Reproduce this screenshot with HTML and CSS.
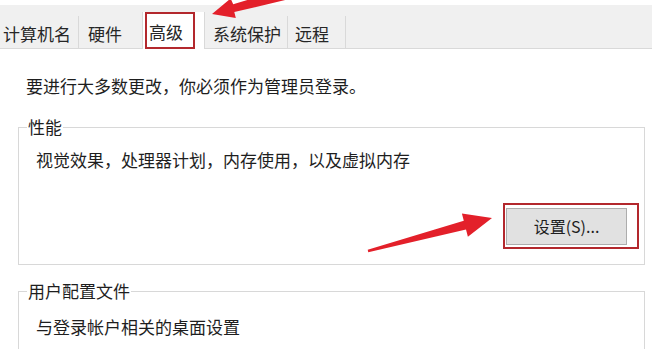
FILE: index.html
```html
<!DOCTYPE html>
<html lang="zh-CN">
<head>
<meta charset="utf-8">
<title>系统属性 - 高级</title>
<link rel="stylesheet" href="styles.css">
</head>
<body>
<div class="window">
  <div class="tabbar">
    <div class="tab tab-name">计算机名</div>
    <div class="tab tab-hw">硬件</div>
    <div class="tab tab-adv active">高级<span class="mark mark-tab"></span></div>
    <div class="tab tab-sys">系统保护</div>
    <div class="tab tab-remote">远程</div>
  </div>
  <div class="panel">
    <p class="note">要进行大多数更改，你必须作为管理员登录。</p>
    <fieldset class="group group-perf">
      <legend>性能</legend>
      <p class="desc desc-perf">视觉效果，处理器计划，内存使用，以及虚拟内存</p>
      <div class="actions">
        <button class="btn" type="button">设置(S)...<span class="mark mark-btn"></span></button>
      </div>
    </fieldset>
    <fieldset class="group group-profile">
      <legend>用户配置文件</legend>
      <p class="desc desc-profile">与登录帐户相关的桌面设置</p>
    </fieldset>
  </div>
  <svg class="arrows" width="652" height="349" viewBox="0 0 652 349" aria-hidden="true">
    <polygon class="arrow" points="300,-16 233.2,4.3 230.6,-1.5 212,14 235.8,17.9 234.3,12.1 302,-4"/>
    <polygon class="arrow" points="367.7,249.8 463.8,220.7 461.9,213.5 492,218 467.9,236.7 466.0,229.5 368.3,252.2"/>
  </svg>
</div>
</body>
</html>
```

FILE: styles.css
```css
* { box-sizing: border-box; }

html, body {
  margin: 0;
  padding: 0;
  background: #ffffff;
}

body {
  width: 652px;
  height: 349px;
  overflow: hidden;
  font-family: "Noto Sans CJK SC", "Noto Sans", sans-serif;
  font-size: 17px;
  color: #1e1e1e;
}

.window {
  position: relative;
  width: 652px;
  height: 349px;
  overflow: hidden;
}

/* ---- tab strip ---- */
.tabbar {
  margin-top: 5px;
  height: 44px;
  background: #f0f0f0;
  border-bottom: 1px solid #d9d9d9;
  display: flex;
  align-items: flex-end;
}

.tab {
  height: 32px;
  line-height: 35px;
  border-right: 1px solid #d9d9d9;
  white-space: nowrap;
  background: #f0f0f0;
  color: #262626;
}

.tab-name { width: 79px; padding-left: 3px; }
.tab-hw { width: 64px; padding-left: 9px; }
.tab-adv { width: 62px; padding-left: 6px; }
.tab-sys { width: 83px; padding-left: 8px; }
.tab-remote { width: 58px; padding-left: 7px; }

.tab.active {
  position: relative;
  height: 37px;
  line-height: 40px;
  margin-bottom: -1px;
  background: #ffffff;
  border-left: 1px solid #d9d9d9;
  z-index: 1;
}

.tab-hw + .tab.active { margin-left: -1px; width: 63px; }

.mark {
  position: absolute;
  border: 2px solid #b3282d;
  pointer-events: none;
}

.mark-tab {
  left: 2px;
  top: 0;
  width: 50px;
  height: 37px;
}

/* ---- page ---- */
.note {
  margin: 25px 0 0 26px;
  line-height: 24px;
}

.group {
  margin: 17px 7px 0 18px;
  border: 1px solid #d8d8d8;
  padding: 0 0 19px 8px;
  min-width: 0;
}

.group legend {
  padding: 0 1px;
  line-height: 24px;
}

.desc {
  margin: 9px 0 0 9px;
  line-height: 24px;
}

.desc-profile { margin-top: 12px; }

.group-profile {
  margin-top: 14px;
  padding-bottom: 60px;
}

.actions {
  display: flex;
  justify-content: flex-end;
  margin-top: 36px;
  padding-right: 17px;
}

.btn {
  position: relative;
  width: 121px;
  height: 37px;
  padding: 0;
  background: #e1e1e1;
  border: 1px solid #adadad;
  font-family: inherit;
  font-size: 16px;
  color: #1e1e1e;
  line-height: 35px;
}

.mark-btn {
  left: -4px;
  top: -6px;
  width: 136px;
  height: 46px;
}

/* ---- annotation arrows ---- */
.arrows {
  position: absolute;
  left: 0;
  top: 0;
  pointer-events: none;
}

.arrow {
  fill: #e3202a;
}
```
